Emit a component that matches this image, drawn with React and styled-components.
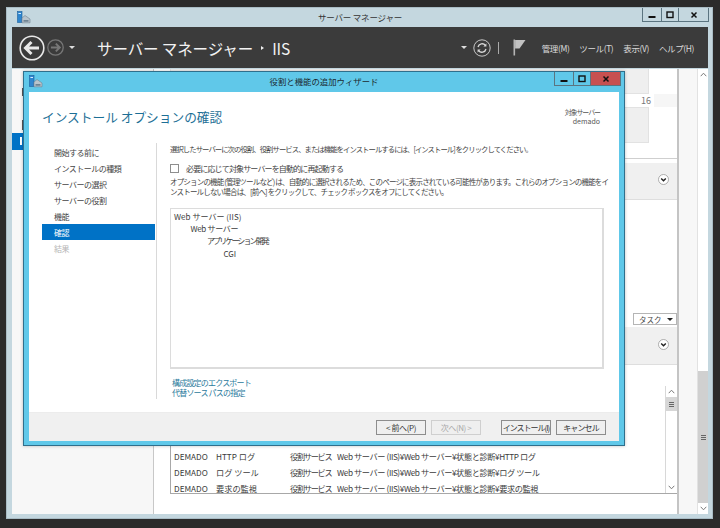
import React from 'react';
import styled, { createGlobalStyle } from 'styled-components';

const GlobalStyle = createGlobalStyle`
    html, body {
        margin: 0;
        padding: 0;
        background: #2b2b2b;
    }
    * {
        box-sizing: border-box;
    }
`

const FONT = '"Noto Sans CJK JP", "Noto Sans", sans-serif';

const Desktop = styled.div`
    width: 720px;
    height: 528px;
    padding: 7px 7px 9px 6px;
    overflow: hidden;
    font-family: ${FONT};
    color: #444;
`

const ManagerWindow = styled.div`
    position: relative;
    height: 100%;
    display: flex;
    flex-direction: column;
    padding: 0 4px 4px 5px;
    background: #c4d7df;
    border: 1px solid #a9bcc5;
`

const TitleBar = styled.div`
    height: 19px;
    display: flex;
    align-items: center;
    justify-content: center;
    position: relative;
    padding-bottom: 2px;
    font-size: 8.5px;
    letter-spacing: -0.2px;
    color: #333;
    flex-shrink: 0;
`

const AppIconSlot = styled.div`
    position: absolute;
    left: ${props => props.$left}px;
    top: 3px;
    line-height: 0;
`

const WindowButtons = styled.div`
    position: absolute;
    top: 0;
    right: ${props => props.$right}px;
    display: flex;
    height: ${props => props.$height}px;
    border: 1px solid #5b7480;
    border-top: none;
`

const WindowButton = styled.div`
    width: ${props => props.$width}px;
    display: flex;
    align-items: center;
    justify-content: center;
    background: ${props => props.$bg || 'transparent'};
    border-left: ${props => props.$first ? 'none' : '1px solid #5b7480'};
`

const NavBar = styled.div`
    height: 41px;
    flex-shrink: 0;
    display: flex;
    align-items: center;
    background: #3b3b3b;
    padding: 0 14px 0 7px;
    color: #f0f0f0;
`

const NavArrows = styled.div`
    display: flex;
    align-items: center;
    width: 78px;
    gap: 2px;
`

const Crumb = styled.div`
    font-size: 15.5px;
    color: #f2f2f2;
    white-space: nowrap;
    letter-spacing: -0.1px;
    display: flex;
    align-items: center;
    gap: 8px;
`

const CrumbSep = styled.span`
    width: 0;
    height: 0;
    border-left: 3px solid #eee;
    border-top: 2.5px solid transparent;
    border-bottom: 2.5px solid transparent;
`

const NavRight = styled.div`
    margin-left: auto;
    display: flex;
    align-items: center;
`

const Caret = styled.span`
    width: 0;
    height: 0;
    border-top: 3px solid #ddd;
    border-left: 3px solid transparent;
    border-right: 3px solid transparent;
    margin: 0 ${props => props.$right}px 0 ${props => props.$left}px;
`

const NavDivider = styled.span`
    width: 1px;
    height: 12px;
    background: #aaa;
    margin: 0 14px 0 7px;
`

const MenuRow = styled.div`
    display: flex;
    gap: 10px;
    margin-left: 16px;
    font-size: 8.5px;
    letter-spacing: -0.4px;
    color: #dcdcdc;
    white-space: nowrap;
`

const Body = styled.div`
    flex: 1;
    min-height: 0;
    display: flex;
    margin-top: 1px;
    background: #f7f7f7;
`

const LeftPanel = styled.div`
    width: 142px;
    flex-shrink: 0;
    border-right: 1px solid #c8c8c8;
    padding-top: 19px;
`

const LeftMark = styled.div`
    width: 2px;
    height: ${props => props.$height}px;
    margin: ${props => props.$top}px 0 0 10px;
    background: #555;
`

const LeftSelected = styled.div`
    height: 17px;
    margin-top: 3px;
    background: #0072c6;
    padding: 4px 0 0 8px;
`

const LeftSelectedGlyph = styled.div`
    width: 2px;
    height: 8px;
    background: #fff;
`

const Main = styled.div`
    width: 525px;
    flex-shrink: 0;
    background: #fff;
    border-right: 2px solid #c4c4c4;
    display: flex;
    flex-direction: column;
`

const Tile = styled.div`
    height: ${props => props.$height}px;
    margin: 0 28px 0 16px;
    background: #efefef;
    border: 1px solid #e2e2e2;
    border-top: ${props => props.$open ? 'none' : '1px solid #e2e2e2'};
`

const CountRow = styled.div`
    height: 13px;
    margin-left: 16px;
    display: flex;
    justify-content: flex-end;
    align-items: center;
    font-size: 9px;
    color: #777;
`

const CountNumber = styled.span`
    margin-right: 3px;
`

const CountFill = styled.span`
    width: 23px;
    height: 100%;
    background: #f6f6f6;
`

const Rule = styled.div`
    height: 1px;
    margin-top: 15px;
    background: #cfcfcf;
`

const SectionHeader = styled.div`
    height: ${props => props.$height}px;
    margin-top: ${props => props.$top}px;
    display: flex;
    align-items: center;
    justify-content: flex-end;
    padding: 0 8px 3px 0;
    background: #f0f0f0;
    border-bottom: 1px solid #dedede;
`

const TaskRow = styled.div`
    display: flex;
    justify-content: flex-end;
    margin-top: 113px;
`

const TaskButton = styled.div`
    width: 44px;
    height: 12px;
    display: flex;
    align-items: center;
    justify-content: space-between;
    padding: 0 3px 0 5px;
    background: #fff;
    border: 1px solid #b5b5b5;
    font-size: 7.5px;
    color: #444;
`

const TaskCaret = styled.span`
    width: 0;
    height: 0;
    border-top: 3px solid #222;
    border-left: 3px solid transparent;
    border-right: 3px solid transparent;
`

const ResultTable = styled.div`
    flex: 0 0 129px;
    margin-left: 16px;
    display: flex;
    align-items: flex-end;
    overflow: hidden;
    background: #fff;
    border-left: 1px solid #a8a8a8;
    border-bottom: 1px solid #a8a8a8;
`

const Rows = styled.div`
    flex: 1;
    min-width: 0;
    margin-bottom: -3px;
`

const Row = styled.div`
    height: 16px;
    display: flex;
    align-items: center;
    padding-left: 3px;
    font-size: 8.2px;
    color: #3c3c3c;
    white-space: nowrap;
`

const Cell = styled.span`
    width: ${props => props.$width}px;
    flex-shrink: 0;
    letter-spacing: ${props => props.$tracking || 0}px;
`

const MiniScroll = styled.div`
    width: 12px;
    height: 107px;
    flex-shrink: 0;
    display: flex;
    flex-direction: column;
    align-items: center;
    border-left: 1px solid #d8d8d8;
    background: #fff;
`

const ScrollEnd = styled.div`
    height: 11px;
    width: 100%;
    display: flex;
    align-items: center;
    justify-content: center;
`

const MiniThumb = styled.div`
    width: 100%;
    height: 14px;
    background: #d6d6d6;
    display: flex;
    align-items: center;
    justify-content: center;
`

const Grip = styled.div`
    width: 5px;
    height: 5px;
    border-top: 1px solid #666;
    border-bottom: 1px solid #666;
    position: relative;
    &::after {
        content: "";
        position: absolute;
        top: 1px;
        left: 0;
        width: 5px;
        height: 1px;
        background: #666;
    }
`

const ScrollSpacer = styled.div`
    flex: ${props => props.$grow};
`

const Gutter = styled.div`
    flex: 1;
`

const PageScroll = styled.div`
    width: 11px;
    flex-shrink: 0;
    display: flex;
    flex-direction: column;
    background: #fff;
    border-left: 1px solid #e2e2e2;
`

const PageThumb = styled.div`
    height: 132px;
    background: #d0d0d0;
    display: flex;
    align-items: center;
    justify-content: center;
`

const Dialog = styled.div`
    position: absolute;
    left: 16px;
    top: 63px;
    width: 602px;
    height: 375px;
    display: flex;
    flex-direction: column;
    padding: 0 5px 4px 5px;
    background: #60c8e9;
    border: 1px solid #2f6f8c;
    box-shadow: 0 0 3px rgba(0, 0, 0, 0.25);
`

const DialogTitle = styled(TitleBar)`
    height: 20px;
    font-size: 8.4px;
    letter-spacing: 0;
    color: #1c2a30;
`

const DialogInner = styled.div`
    flex: 1;
    min-height: 0;
    display: flex;
    flex-direction: column;
    background: #fff;
`

const DialogHeader = styled.div`
    height: 51px;
    flex-shrink: 0;
    display: flex;
    justify-content: space-between;
    padding: 13px 19px 0 13px;
`

const PageTitle = styled.div`
    font-size: 12.7px;
    line-height: 24px;
    color: #1d6f96;
    white-space: nowrap;
`

const TargetServer = styled.div`
    padding-top: 3px;
    font-size: 7px;
    line-height: 9px;
    text-align: right;
    color: #555;
`

const TargetLabel = styled.div`
    letter-spacing: -1.1px;
`

const DialogBody = styled.div`
    flex: 1;
    min-height: 0;
    display: flex;
    padding-bottom: 13px;
`

const SideNav = styled.div`
    width: 128px;
    flex-shrink: 0;
    padding: 1px 1px 0 13px;
    border-right: 1px solid #d9d9d9;
`

const SideItem = styled.div`
    height: 16px;
    display: flex;
    align-items: center;
    padding-left: 12px;
    font-size: 8px;
    letter-spacing: -0.5px;
    white-space: nowrap;
    background: ${props => props.$active ? '#0072c6' : 'transparent'};
    color: ${props => props.$active ? '#fff' : props.$disabled ? '#b5b5b5' : '#444'};
`

const Content = styled.div`
    flex: 1;
    min-width: 0;
    padding: 0 15px 0 13px;
    display: flex;
    flex-direction: column;
`

const Lead = styled.div`
    font-size: 7.4px;
    letter-spacing: -0.98px;
    line-height: 11px;
    white-space: nowrap;
`

const CheckRow = styled.label`
    display: flex;
    align-items: center;
    gap: 7px;
    margin-top: 9px;
    font-size: 8px;
    letter-spacing: -0.85px;
    line-height: 11px;
    white-space: nowrap;
`

const CheckBox = styled.span`
    width: 9px;
    height: 9px;
    background: #fff;
    border: 1px solid #8e8e8e;
`

const Note = styled.div`
    margin-top: 3px;
    font-size: 7.5px;
    letter-spacing: -0.82px;
    line-height: 10px;
    white-space: nowrap;
`

const SummaryBox = styled.div`
    height: 161px;
    margin-top: 11px;
    padding: 1px 3px;
    background: #fff;
    border: 1px solid #dcdcdc;
    border-right-width: 2px;
    border-bottom-width: 2px;
`

const SummaryLine = styled.div`
    height: 12.3px;
    display: flex;
    align-items: center;
    margin-left: ${props => props.$level * 16.5}px;
    font-size: 8px;
    letter-spacing: ${props => props.$tracking}px;
    color: #3c3c3c;
`

const Links = styled.div`
    margin: 9px 0 0 2px;
`

const TextLink = styled.div`
    font-size: 8px;
    letter-spacing: -0.8px;
    line-height: 10px;
    color: #2a7a9c;
`

const Footer = styled.div`
    height: 29px;
    flex-shrink: 0;
    display: flex;
    align-items: center;
    justify-content: flex-end;
    gap: 5px;
    padding: 0 13px 0 0;
    background: #f0f0f0;
    border-top: 1px solid #ececec;
`

const DialogButton = styled.div`
    width: 50px;
    height: 15px;
    margin-left: ${props => props.$gap || 0}px;
    display: flex;
    align-items: center;
    justify-content: center;
    font-size: 8px;
    letter-spacing: ${props => props.$tracking || -0.4}px;
    white-space: nowrap;
    background: #efefef;
    border: 1px solid ${props => props.$disabled ? '#cfcfcf' : '#8d8d8d'};
    color: ${props => props.$disabled ? '#a8a8a8' : '#333'};
`

function ServerIcon() {
    return (
        <svg width="14" height="13" viewBox="0 0 14 13">
            <rect x="0.5" y="0.5" width="4.5" height="11" fill="#2f86cf" stroke="#1d5f9c" strokeWidth="0.6"/>
            <rect x="1.4" y="2" width="2.6" height="1" fill="#d6ecff"/>
            <path d="M5 7 L8 4.5 L13 8 L13 11.8 L5 11.8 Z" fill="#b9c4cc" stroke="#6f8290" strokeWidth="0.6"/>
            <rect x="6.5" y="9.2" width="5" height="1.4" fill="#5d7486"/>
        </svg>
    );
}

function MinimizeGlyph() {
    return <svg width="8" height="8" viewBox="0 0 8 8"><rect x="0.5" y="5" width="7" height="2" fill="#111"/></svg>;
}

function MaximizeGlyph() {
    return <svg width="8" height="8" viewBox="0 0 8 8"><rect x="1" y="1" width="6" height="5.5" fill="none" stroke="#111" strokeWidth="1.4"/></svg>;
}

function CloseGlyph() {
    return <svg width="8" height="8" viewBox="0 0 8 8"><path d="M1.5 1.5 L6.5 6.5 M6.5 1.5 L1.5 6.5" stroke="#111" strokeWidth="1.5"/></svg>;
}

function BackArrow() {
    return (
        <svg width="26" height="26" viewBox="0 0 26 26">
            <circle cx="13" cy="13" r="11.8" fill="none" stroke="#e8e8e8" strokeWidth="1.6"/>
            <path d="M20 13 H7 M12.5 7 L6.5 13 L12.5 19" fill="none" stroke="#e8e8e8" strokeWidth="3"/>
        </svg>
    );
}

function ForwardArrow() {
    return (
        <svg width="17" height="17" viewBox="0 0 26 26">
            <circle cx="13" cy="13" r="11.8" fill="none" stroke="#777" strokeWidth="2"/>
            <path d="M6 13 H19 M13.5 7 L19.5 13 L13.5 19" fill="none" stroke="#777" strokeWidth="3"/>
        </svg>
    );
}

function RefreshIcon() {
    return (
        <svg width="18" height="18" viewBox="0 0 18 18">
            <circle cx="9" cy="9" r="8.2" fill="none" stroke="#c8c8c8" strokeWidth="1"/>
            <path d="M5 8 A4.2 4.2 0 0 1 12.4 6.4 M13 10 A4.2 4.2 0 0 1 5.6 11.6" fill="none" stroke="#d8d8d8" strokeWidth="1.3"/>
            <path d="M13.4 4.6 V7.6 H10.4 Z M4.6 13.4 V10.4 H7.6 Z" fill="#d8d8d8"/>
        </svg>
    );
}

function FlagIcon() {
    return (
        <svg width="13" height="17" viewBox="0 0 13 17">
            <rect x="0.5" y="0.5" width="1.6" height="16" fill="#b5b5b5"/>
            <path d="M2.1 1 H12.5 L6.5 9.5 H2.1 Z" fill="#c2c2c2"/>
        </svg>
    );
}

function ExpandIcon() {
    return (
        <svg width="11" height="11" viewBox="0 0 11 11">
            <circle cx="5.5" cy="5.5" r="5" fill="#fff" stroke="#9a9a9a" strokeWidth="0.8"/>
            <path d="M3.2 4.5 L5.5 6.8 L7.8 4.5" fill="none" stroke="#222" strokeWidth="1.4"/>
        </svg>
    );
}

function ScrollArrow({ up }) {
    return (
        <svg width="7" height="5" viewBox="0 0 7 5">
            <path d={up ? 'M0.7 4.2 L3.5 1.2 L6.3 4.2' : 'M0.7 0.8 L3.5 3.8 L6.3 0.8'} fill="none" stroke="#7a7a7a" strokeWidth="1"/>
        </svg>
    );
}

const steps = ['開始する前に', 'インストールの種類', 'サーバーの選択', 'サーバーの役割', '機能', '確認', '結果'];

const summary = [
    { level: 0, tracking: 0.05, text: 'Web サーバー (IIS)' },
    { level: 1, tracking: -0.3, text: 'Web サーバー' },
    { level: 2, tracking: -1.9, text: 'アプリケーション開発' },
    { level: 3, tracking: 0, text: 'CGI' },
];

const results = ['HTTP ログ', 'ログ ツール', '要求の監視'];

function App() {
    return (
        <Desktop>
            <GlobalStyle/>
            <ManagerWindow>
                <TitleBar>
                    <AppIconSlot $left={5}><ServerIcon/></AppIconSlot>
                    サーバー マネージャー
                    <WindowButtons $right={-1} $height={14}>
                        <WindowButton $first $width={18}><MinimizeGlyph/></WindowButton>
                        <WindowButton $width={17}><MaximizeGlyph/></WindowButton>
                        <WindowButton $width={30}><CloseGlyph/></WindowButton>
                    </WindowButtons>
                </TitleBar>

                <NavBar>
                    <NavArrows>
                        <BackArrow/>
                        <ForwardArrow/>
                        <Caret $left={3} $right={0}/>
                    </NavArrows>
                    <Crumb>サーバー マネージャー <CrumbSep/> IIS</Crumb>
                    <NavRight>
                        <Caret $left={0} $right={6}/>
                        <RefreshIcon/>
                        <NavDivider/>
                        <FlagIcon/>
                        <MenuRow>
                            <span>管理(M)</span>
                            <span>ツール(T)</span>
                            <span>表示(V)</span>
                            <span>ヘルプ(H)</span>
                        </MenuRow>
                    </NavRight>
                </NavBar>

                <Body>
                    <LeftPanel>
                        <LeftMark $top={0} $height={8}/>
                        <LeftMark $top={24} $height={10}/>
                        <LeftSelected><LeftSelectedGlyph/></LeftSelected>
                    </LeftPanel>

                    <Main>
                        <Tile $open $height={25}/>
                        <CountRow>
                            <CountNumber>16</CountNumber>
                            <CountFill/>
                        </CountRow>
                        <Tile $height={36}/>
                        <Rule/>
                        <SectionHeader $top={4} $height={37}><ExpandIcon/></SectionHeader>
                        <TaskRow>
                            <TaskButton>タスク<TaskCaret/></TaskButton>
                        </TaskRow>
                        <SectionHeader $top={2} $height={38}><ExpandIcon/></SectionHeader>
                        <ResultTable>
                            <Rows>
                                {results.map(name => (
                                    <Row key={name}>
                                        <Cell $width={42}>DEMADO</Cell>
                                        <Cell $width={74}>{name}</Cell>
                                        <Cell $width={47} $tracking={-1.3}>役割サービス</Cell>
                                        <Cell $tracking={-0.4}>Web サーバー (IIS)¥Web サーバー¥状態と診断¥{name}</Cell>
                                    </Row>
                                ))}
                            </Rows>
                            <MiniScroll>
                                <ScrollEnd><ScrollArrow up/></ScrollEnd>
                                <MiniThumb><Grip/></MiniThumb>
                                <ScrollSpacer $grow={1}/>
                                <ScrollEnd><ScrollArrow/></ScrollEnd>
                            </MiniScroll>
                        </ResultTable>
                    </Main>

                    <Gutter/>

                    <PageScroll>
                        <ScrollEnd><ScrollArrow up/></ScrollEnd>
                        <ScrollSpacer $grow={1}/>
                        <PageThumb><Grip/></PageThumb>
                        <ScrollEnd><ScrollArrow/></ScrollEnd>
                    </PageScroll>
                </Body>

                <Dialog>
                    <DialogTitle>
                        <AppIconSlot $left={0}><ServerIcon/></AppIconSlot>
                        役割と機能の追加ウィザード
                        <WindowButtons $right={-2} $height={14}>
                            <WindowButton $first $width={18}><MinimizeGlyph/></WindowButton>
                            <WindowButton $width={17}><MaximizeGlyph/></WindowButton>
                            <WindowButton $width={30} $bg="#c75050"><CloseGlyph/></WindowButton>
                        </WindowButtons>
                    </DialogTitle>

                    <DialogInner>
                        <DialogHeader>
                            <PageTitle>インストール オプションの確認</PageTitle>
                            <TargetServer><TargetLabel>対象サーバー</TargetLabel>demado</TargetServer>
                        </DialogHeader>

                        <DialogBody>
                            <SideNav>
                                {steps.map(step => (
                                    <SideItem key={step} $active={step === '確認'} $disabled={step === '結果'}>{step}</SideItem>
                                ))}
                            </SideNav>
                            <Content>
                                <Lead>選択したサーバーに次の役割、役割サービス、または機能をインストールするには、[インストール] をクリックしてください。</Lead>
                                <CheckRow><CheckBox/>必要に応じて対象サーバーを自動的に再起動する</CheckRow>
                                <Note>
                                    オプションの機能 (管理ツールなど) は、自動的に選択されるため、このページに表示されている可能性があります。これらのオプションの機能をイ<br/>
                                    ンストールしない場合は、[前へ] をクリックして、チェック ボックスをオフにしてください。
                                </Note>
                                <SummaryBox>
                                    {summary.map(line => (
                                        <SummaryLine key={line.text} $level={line.level} $tracking={line.tracking}>{line.text}</SummaryLine>
                                    ))}
                                </SummaryBox>
                                <Links>
                                    <TextLink>構成設定のエクスポート</TextLink>
                                    <TextLink>代替ソース パスの指定</TextLink>
                                </Links>
                            </Content>
                        </DialogBody>

                        <Footer>
                            <DialogButton>&lt; 前へ(P)</DialogButton>
                            <DialogButton $disabled>次へ(N) &gt;</DialogButton>
                            <DialogButton $gap={15} $tracking={-1}>インストール(I)</DialogButton>
                            <DialogButton $tracking={-0.9}>キャンセル</DialogButton>
                        </Footer>
                    </DialogInner>
                </Dialog>
            </ManagerWindow>
        </Desktop>
    );
}

export default App;
